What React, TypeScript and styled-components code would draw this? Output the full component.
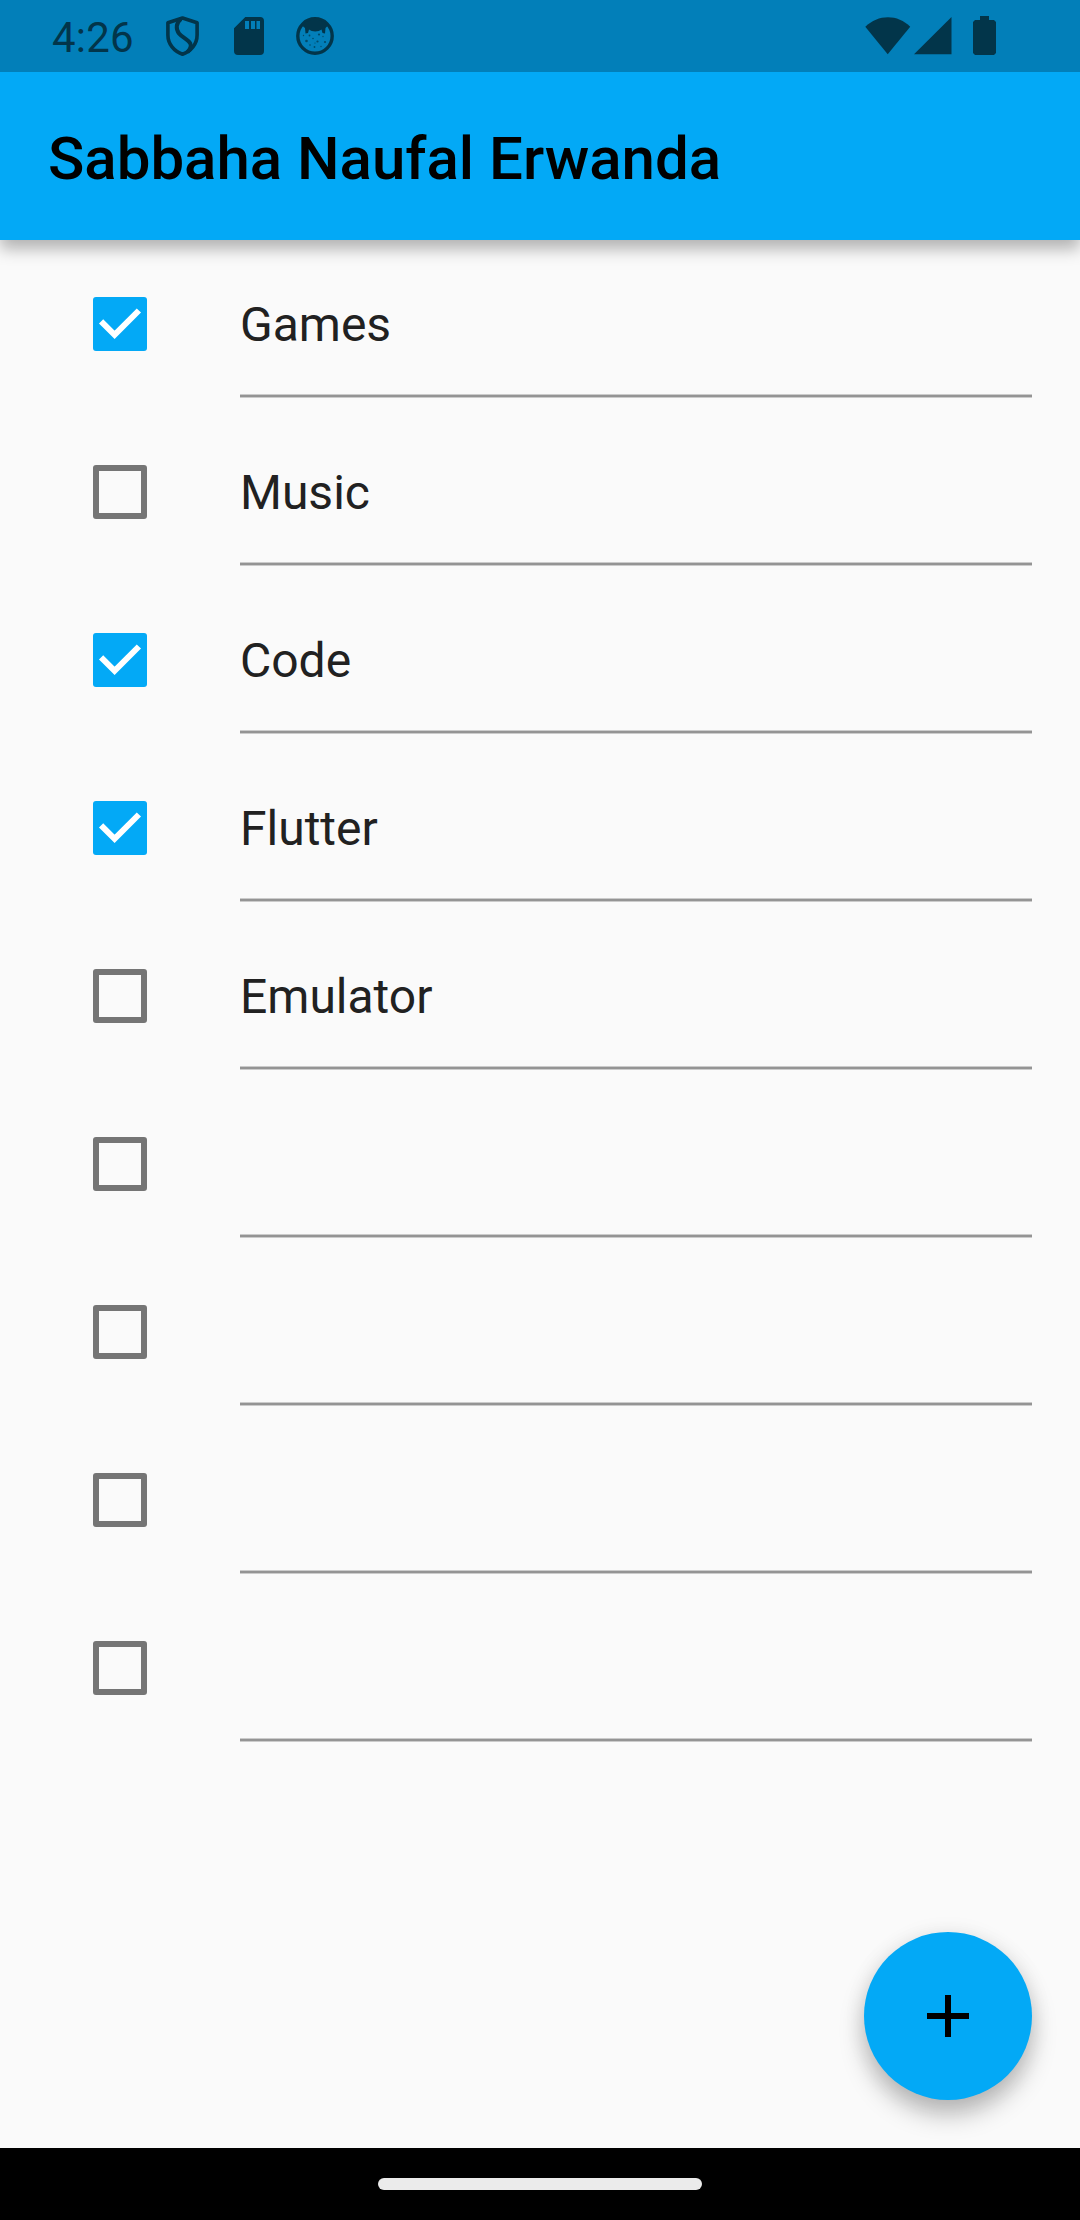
import React, { useState } from "react";
import styled, { createGlobalStyle } from "styled-components";

const ACCENT = "#03a9f6";
const SYSTEM = "#02354a";

const GlobalStyle = createGlobalStyle`
  * { box-sizing: border-box; }
  body { margin: 0; background: #fafafa; }
`;

const Screen = styled.div`
  display: flex;
  flex-direction: column;
  position: relative;
  width: 1080px;
  height: 2220px;
  overflow: hidden;
  background: #fafafa;
  font-family: Roboto, "Liberation Sans", sans-serif;
`;

const StatusBar = styled.header`
  display: flex;
  align-items: center;
  justify-content: space-between;
  flex: none;
  height: 72px;
  padding: 0 84px 0 52px;
  background: #027fb9;
  color: ${SYSTEM};
  z-index: 2;
`;

const StatusGroup = styled.div<{ $gap?: number }>`
  display: flex;
  align-items: center;
  gap: ${(p) => p.$gap ?? 0}px;
`;

const Clock = styled.time`
  width: 114px;
  font-size: 42px;
  line-height: 72px;
  letter-spacing: 0.2px;
  padding-top: 4px;
`;

const Glyph = styled.svg<{ $w: number; $h: number }>`
  display: block;
  flex: none;
  width: ${(p) => p.$w}px;
  height: ${(p) => p.$h}px;
`;

const AppBar = styled.div`
  display: flex;
  align-items: center;
  flex: none;
  height: 168px;
  padding: 6px 48px 0;
  background: ${ACCENT};
  box-shadow: 0 9px 15px 0 rgba(0, 0, 0, 0.29);
  z-index: 1;
`;

const Title = styled.h1`
  margin: 0;
  font-size: 60px;
  font-weight: 500;
  line-height: 70px;
  color: #000;
  white-space: nowrap;
`;

const List = styled.ul`
  flex: 1;
  margin: 0;
  padding: 0 48px 0 93px;
  list-style: none;
`;

const Row = styled.li`
  display: flex;
  align-items: center;
  gap: 93px;
  height: 168px;
`;

const Box = styled.button<{ $checked: boolean }>`
  display: flex;
  flex: none;
  width: 54px;
  height: 54px;
  padding: 0;
  border: ${(p) => (p.$checked ? "0" : "6px solid #757575")};
  border-radius: 3px;
  background: ${(p) => (p.$checked ? ACCENT : "transparent")};
`;

const Field = styled.div`
  display: flex;
  flex-direction: column;
  flex: 1;
  height: 168px;
  padding: 56px 0 10px;
`;

const Label = styled.span`
  flex: 1;
  font-size: 48px;
  line-height: 58px;
  color: #212121;
`;

const Underline = styled.div`
  height: 4px;
  border: solid #cbcbcb;
  border-width: 1px 0;
  background: #949494;
`;

const Fab = styled.button`
  position: absolute;
  right: 48px;
  bottom: 120px;
  display: grid;
  place-items: center;
  width: 168px;
  height: 168px;
  padding: 0;
  border: 0;
  border-radius: 50%;
  background: ${ACCENT};
  box-shadow: 0 15px 25px rgba(0, 0, 0, 0.25), 0 2px 22px rgba(0, 0, 0, 0.08);
`;

const NavBar = styled.footer`
  display: flex;
  flex: none;
  justify-content: center;
  height: 72px;
  padding-top: 30px;
  background: #000;
`;

const Handle = styled.div`
  width: 324px;
  height: 12px;
  border-radius: 6px;
  background: #ebebeb;
`;

const ShieldIcon = () => (
  <Glyph $w={33} $h={40} viewBox="0 0 33 40" fill="none" stroke="currentColor" strokeWidth="3.6">
    <path d="M16.5 2 1.9 6.8V19C1.9 28 8 35.4 16.5 38.2 25 35.4 31.1 28 31.1 19V6.8Z" strokeLinejoin="round" />
    <path d="M15 3C10 7 9.5 13 13 17.5 16 21.2 22 23.5 24.3 27.5 25.7 30.5 24.5 33 21.5 36" strokeWidth="4" />
  </Glyph>
);

const SdCardIcon = () => (
  <Glyph $w={30} $h={38} viewBox="0 0 30 38">
    <path
      fill="currentColor"
      fillRule="evenodd"
      d="M11.3 0H26a4 4 0 0 1 4 4V34a4 4 0 0 1-4 4H4a4 4 0 0 1-4-4V11.3ZM11 4V12H15V4ZM17 4V12H21V4ZM22.5 4V12H26V4Z"
    />
  </Glyph>
);

const DOTS = [
  [7.5, 18.5, 0.7], [13.5, 18.5, 0.9], [23, 17.5, 1.1], [27, 19.5, 0.7], [10.5, 24, 1.3],
  [17, 21.5, 0.8], [21.5, 24.5, 1.1], [29, 25, 1.1], [14, 28, 0.8], [18.5, 30, 0.9],
  [25, 29.5, 0.7], [19, 26, 0.6],
];

const FaceIcon = () => (
  <Glyph $w={38} $h={38} viewBox="0 0 38 38">
    <circle cx="19" cy="19" r="17.2" fill="none" stroke="currentColor" strokeWidth="3.4" />
    <path
      fill="currentColor"
      d="M6 8.5C10 1 28 1 32 8.5L29.5 11 29 16.5 26.5 16 25.5 12.5C22.5 15 16 15 13 12.5L12 16 9.5 16.5 9 11Z"
    />
    {DOTS.map(([cx, cy, r]) => (
      <circle key={`${cx}-${cy}`} cx={cx} cy={cy} r={r} fill="currentColor" opacity="0.7" />
    ))}
  </Glyph>
);

const WifiIcon = () => (
  <Glyph $w={46} $h={38} viewBox="0 0 46 38">
    <path fill="currentColor" d="M0.3 9.8C13 -3 33 -3 45.2 9.8L22.7 37.3Z" />
  </Glyph>
);

const SignalIcon = () => (
  <Glyph $w={38} $h={38} viewBox="0 0 38 38">
    <path fill="currentColor" d="M37.5 0V37.3H0Z" />
  </Glyph>
);

const BatteryIcon = () => (
  <Glyph $w={23} $h={40} viewBox="0 0 23 40">
    <path fill="currentColor" d="M7 0H16V4H21L23 6V37L21 39H2L0 37V6L2 4H7Z" />
  </Glyph>
);

const CheckIcon = () => (
  <Glyph $w={54} $h={54} viewBox="0 0 54 54">
    <path d="M8.1 24.3 21.6 37.8 45.9 13.5" fill="none" stroke="#fff" strokeWidth="6" />
  </Glyph>
);

const PlusIcon = () => (
  <Glyph $w={42} $h={42} viewBox="0 0 42 42">
    <path d="M21 0V42M0 21H42" stroke="#000" strokeWidth="6" />
  </Glyph>
);

interface Item {
  text: string;
  done: boolean;
}

const INITIAL: Item[] = [
  { text: "Games", done: true },
  { text: "Music", done: false },
  { text: "Code", done: true },
  { text: "Flutter", done: true },
  { text: "Emulator", done: false },
  { text: "", done: false },
  { text: "", done: false },
  { text: "", done: false },
  { text: "", done: false },
];

export default function App() {
  const [items, setItems] = useState(INITIAL);
  const toggle = (index: number) =>
    setItems(items.map((it, i) => (i === index ? { ...it, done: !it.done } : it)));

  return (
    <Screen>
      <GlobalStyle />
      <StatusBar>
        <StatusGroup>
          <Clock>4:26</Clock>
          <StatusGroup $gap={35}>
            <ShieldIcon />
            <StatusGroup $gap={32}>
              <SdCardIcon />
              <FaceIcon />
            </StatusGroup>
          </StatusGroup>
        </StatusGroup>
        <StatusGroup $gap={21}>
          <StatusGroup $gap={3}>
            <WifiIcon />
            <SignalIcon />
          </StatusGroup>
          <BatteryIcon />
        </StatusGroup>
      </StatusBar>
      <AppBar>
        <Title>Sabbaha Naufal Erwanda</Title>
      </AppBar>
      <List>
        {items.map((item, i) => (
          <Row key={i}>
            <Box
              type="button"
              role="checkbox"
              aria-checked={item.done}
              $checked={item.done}
              onClick={() => toggle(i)}
            >
              {item.done && <CheckIcon />}
            </Box>
            <Field>
              <Label>{item.text}</Label>
              <Underline />
            </Field>
          </Row>
        ))}
      </List>
      <Fab type="button" onClick={() => setItems([...items, { text: "", done: false }])}>
        <PlusIcon />
      </Fab>
      <NavBar>
        <Handle />
      </NavBar>
    </Screen>
  );
}
